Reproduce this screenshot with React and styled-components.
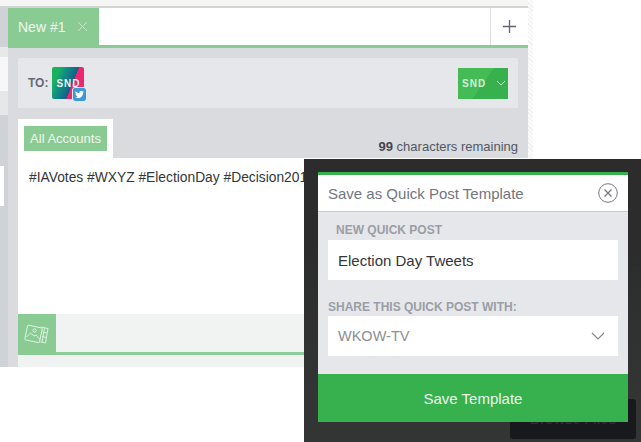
import React from "react"
import styled, { createGlobalStyle } from "styled-components"
import { FaTwitter } from "react-icons/fa"

const Global = createGlobalStyle`
html, body { margin: 0; padding: 0; background: #fff; }
body { font-family: "Liberation Sans", Arial, sans-serif; }
* { box-sizing: border-box; }
`

const Page = styled.div`
position: relative;
width: 641px;
height: 442px;
overflow: hidden;
background: #fff;
display: flex;
align-items: flex-start;
`
const Workspace = styled.div`
width: 528px;
height: 367px;
display: flex;
flex-direction: column;
`
const Edge = styled.div`
width: 5px;
height: 160px;
background: repeating-linear-gradient(45deg, #f1f1f1 0 1px, #fbfbfb 1px 3px);
`
const TopBar = styled.div`
height: 8px;
flex: none;
background: #f5f5f4;
border-bottom: 2px solid #d3d4d6;
`
const Main = styled.div`
flex: 1;
display: flex;
min-height: 0;
`
const Gutter = styled.div`
width: 8px;
flex: none;
display: flex;
flex-direction: column;
background: #cfd2d7;
`
const GutterBlock = styled.div`
height: ${p => p.$h}px;
width: ${p => p.$w || 8}px;
margin-top: ${p => p.$top || 0}px;
background: ${p => p.$bg};
`
const Column = styled.div`
flex: 1;
display: flex;
flex-direction: column;
min-width: 0;
`
const TabBar = styled.div`
height: 40px;
flex: none;
display: flex;
background: #fff;
border-bottom: 3px solid #8acb93;
`
const Tab = styled.div`
width: 91px;
display: flex;
align-items: center;
padding-left: 10px;
gap: 12px;
background: #8acb93;
color: #eef8ef;
font-size: 14px;
`
const AddCell = styled.div`
margin-left: auto;
width: 38px;
display: flex;
align-items: center;
justify-content: center;
border-left: 1px solid #dcdee0;
`
const Body = styled.div`
flex: 1;
display: flex;
flex-direction: column;
background: #d9dbdf;
padding: 10px 0 0 10px;
`
const ToBar = styled.div`
width: 500px;
height: 50px;
flex: none;
display: flex;
align-items: center;
padding: 0 10px;
background: #e6e7ea;
`
const ToLabel = styled.span`
font-size: 12px;
font-weight: 700;
color: #666b73;
margin-right: 4px;
`
const Avatar = styled.div`
position: relative;
width: 32px;
height: 32px;
border-radius: 2px;
display: flex;
align-items: center;
justify-content: center;
color: #e8f3f2;
font-size: 10px;
font-weight: 700;
letter-spacing: 1px;
background: linear-gradient(112deg, #1bb060 0 18%, #0f8f84 34%, #12648a 58%, #0f5a7c 60%, #ee2672 61%, #ee2672 100%);
`
const Badge = styled.span`
position: absolute;
right: -2px;
bottom: -2px;
width: 13px;
height: 13px;
display: flex;
align-items: center;
justify-content: center;
background: #3a9ad9;
border-radius: 2px;
outline: 1px solid #e6e7ea;
color: #fff;
font-size: 9px;
`
const AccountButton = styled.div`
margin-left: auto;
width: 50px;
height: 31px;
display: flex;
align-items: center;
padding-left: 4px;
gap: 10px;
color: #d5efd9;
font-size: 10px;
font-weight: 700;
letter-spacing: 1px;
background: linear-gradient(125deg, #44bb55 0 50%, #37b04e 50%);
`
const TabRow = styled.div`
height: 39px;
flex: none;
margin-top: 11px;
display: flex;
align-items: flex-end;
justify-content: space-between;
width: 500px;
`
const AccountTab = styled.div`
width: 95px;
height: 39px;
padding: 7px 6px 6px;
background: #fff;
`
const AccountChip = styled.div`
height: 25px;
display: flex;
align-items: center;
justify-content: center;
background: #8acb93;
color: #eef8ef;
font-size: 13px;
`
const Counter = styled.div`
padding-bottom: 4px;
font-size: 13px;
color: #54585f;
b { color: #43474d; }
`
const Editor = styled.div`
height: 156px;
flex: none;
padding: 12px 11px;
background: #fff;
color: #33363a;
font-size: 13.8px;
white-space: nowrap;
overflow: hidden;
`
const Toolbar = styled.div`
height: 41px;
flex: none;
display: flex;
background: #f1f3f2;
border-bottom: 3px solid #8fcb9b;
`
const MediaButton = styled.div`
width: 38px;
height: 41px;
display: flex;
align-items: center;
justify-content: center;
background: #8acb93;
`
const Footer = styled.div`
flex: 1;
background: #f1f3f2;
`
const Backdrop = styled.div`
position: absolute;
left: 304px;
top: 159px;
width: 337px;
height: 283px;
background: linear-gradient(#2c2c2c 0 90px, #333534 240px);
`
const BrowseButton = styled.div`
position: absolute;
left: 206px;
top: 240px;
width: 126px;
height: 40px;
display: flex;
align-items: center;
justify-content: center;
border-radius: 3px;
background: #18191d;
color: #2d2e31;
font-size: 14px;
font-weight: 700;
`
const Rule = styled.div`
position: absolute;
left: 324px;
top: 105px;
width: 13px;
height: 2px;
background: #263029;
`
const Modal = styled.div`
position: absolute;
left: 14px;
top: 13px;
width: 310px;
display: flex;
flex-direction: column;
background: #e6e7ea;
border-top: 3px solid #37b04e;
`
const ModalHead = styled.div`
height: 37px;
display: flex;
align-items: center;
justify-content: space-between;
padding: 0 10px;
background: #fff;
border-bottom: 1px solid #c9cbce;
color: #72767e;
font-size: 15px;
`
const Form = styled.div`
padding: 10px 10px 18px;
display: flex;
flex-direction: column;
`
const FieldLabel = styled.div`
height: 18px;
padding-left: ${p => p.$indent || 0}px;
padding-top: ${p => p.$drop || 0}px;
font-size: 12px;
line-height: 16px;
font-weight: 700;
color: #9a9ea6;
`
const Field = styled.div`
height: 40px;
display: flex;
align-items: center;
justify-content: space-between;
padding: 0 13px 0 10px;
margin-bottom: ${p => p.$gap || 0}px;
background: #fff;
font-size: ${p => p.$muted ? 14.5 : 15}px;
color: ${p => p.$muted ? "#8b8f96" : "#33363a"};
`
const SaveButton = styled.div`
height: 48px;
display: flex;
align-items: center;
justify-content: center;
background: #37b04e;
color: #eaf7ec;
font-size: 15px;
`

const MediaIcon = () => (
  <svg width="26" height="22" viewBox="0 0 26 22" fill="none" stroke="#e4f4e6" strokeWidth="0.9" strokeLinejoin="round">
    <rect x="2" y="2.5" width="15" height="15" rx="1" transform="rotate(12 10 10)" />
    <path d="M2.5 13l4-4 3.5 3 2-1 4 4.5" />
    <circle cx="10.5" cy="6.5" r="1.6" />
    <path d="M17 3l7 1.5-2.5 14.5-5-1" />
    <path d="M18.5 8l4.5 1M18 12.5l4.5 1M20.5 4l-2.500 14" />
  </svg>
)

const App = () => (
  <Page>
    <Global />
    <Workspace>
      <TopBar />
      <Main>
        <Gutter>
          <GutterBlock $h={39} $bg="#cfd2d7" />
          <GutterBlock $h={10} $bg="#e7e8ea" />
          <GutterBlock $h={34} $bg="#f7f7f7" />
          <GutterBlock $h={24} $bg="#e6e7e9" />
          <GutterBlock $h={40} $w={4} $top={51} $bg="#fff" />
        </Gutter>
        <Column>
          <TabBar>
            <Tab>
              New #1
              <svg width="11" height="11" viewBox="0 0 11 11" stroke="#c3e6c8" strokeWidth="1">
                <path d="M1 1l9 9M10 1l-9 9" />
              </svg>
            </Tab>
            <AddCell>
              <svg width="13" height="13" viewBox="0 0 13 13" stroke="#62666d" strokeWidth="1.3">
                <path d="M6.500 0v13M0 6.500h13" />
              </svg>
            </AddCell>
          </TabBar>
          <Body>
            <ToBar>
              <ToLabel>TO:</ToLabel>
              <Avatar>
                SND
                <Badge><FaTwitter /></Badge>
              </Avatar>
              <AccountButton>
                SND
                <svg width="10" height="6" viewBox="0 0 10 6" fill="none" stroke="#cdeed2" strokeWidth="1">
                  <path d="M1 1l4 4 4-4" />
                </svg>
              </AccountButton>
            </ToBar>
            <TabRow>
              <AccountTab><AccountChip>All Accounts</AccountChip></AccountTab>
              <Counter><b>99</b> characters remaining</Counter>
            </TabRow>
            <Editor>#IAVotes #WXYZ #ElectionDay #Decision2016</Editor>
            <Toolbar>
              <MediaButton><MediaIcon /></MediaButton>
            </Toolbar>
            <Footer />
          </Body>
        </Column>
      </Main>
    </Workspace>
    <Edge />
    <Backdrop>
      <BrowseButton>Browse Files</BrowseButton>
      <Rule />
      <Modal>
        <ModalHead>
          Save as Quick Post Template
          <svg width="20" height="20" viewBox="0 0 20 20" fill="none" stroke="#72767e">
            <circle cx="10" cy="10" r="9.3" strokeWidth="1" />
            <path d="M6.500 6.500l7 7M13.500 6.500l-7 7" strokeWidth="1.3" />
          </svg>
        </ModalHead>
        <Form>
          <FieldLabel $indent={8}>NEW QUICK POST</FieldLabel>
          <Field $gap={18}>Election Day Tweets</Field>
          <FieldLabel $drop={1}>SHARE THIS QUICK POST WITH:</FieldLabel>
          <Field $muted>
            WKOW-TV
            <svg width="14" height="8" viewBox="0 0 14 8" fill="none" stroke="#85898f" strokeWidth="1.2">
              <path d="M1 1l6 6 6-6" />
            </svg>
          </Field>
        </Form>
        <SaveButton>Save Template</SaveButton>
      </Modal>
    </Backdrop>
  </Page>
)

export default App
